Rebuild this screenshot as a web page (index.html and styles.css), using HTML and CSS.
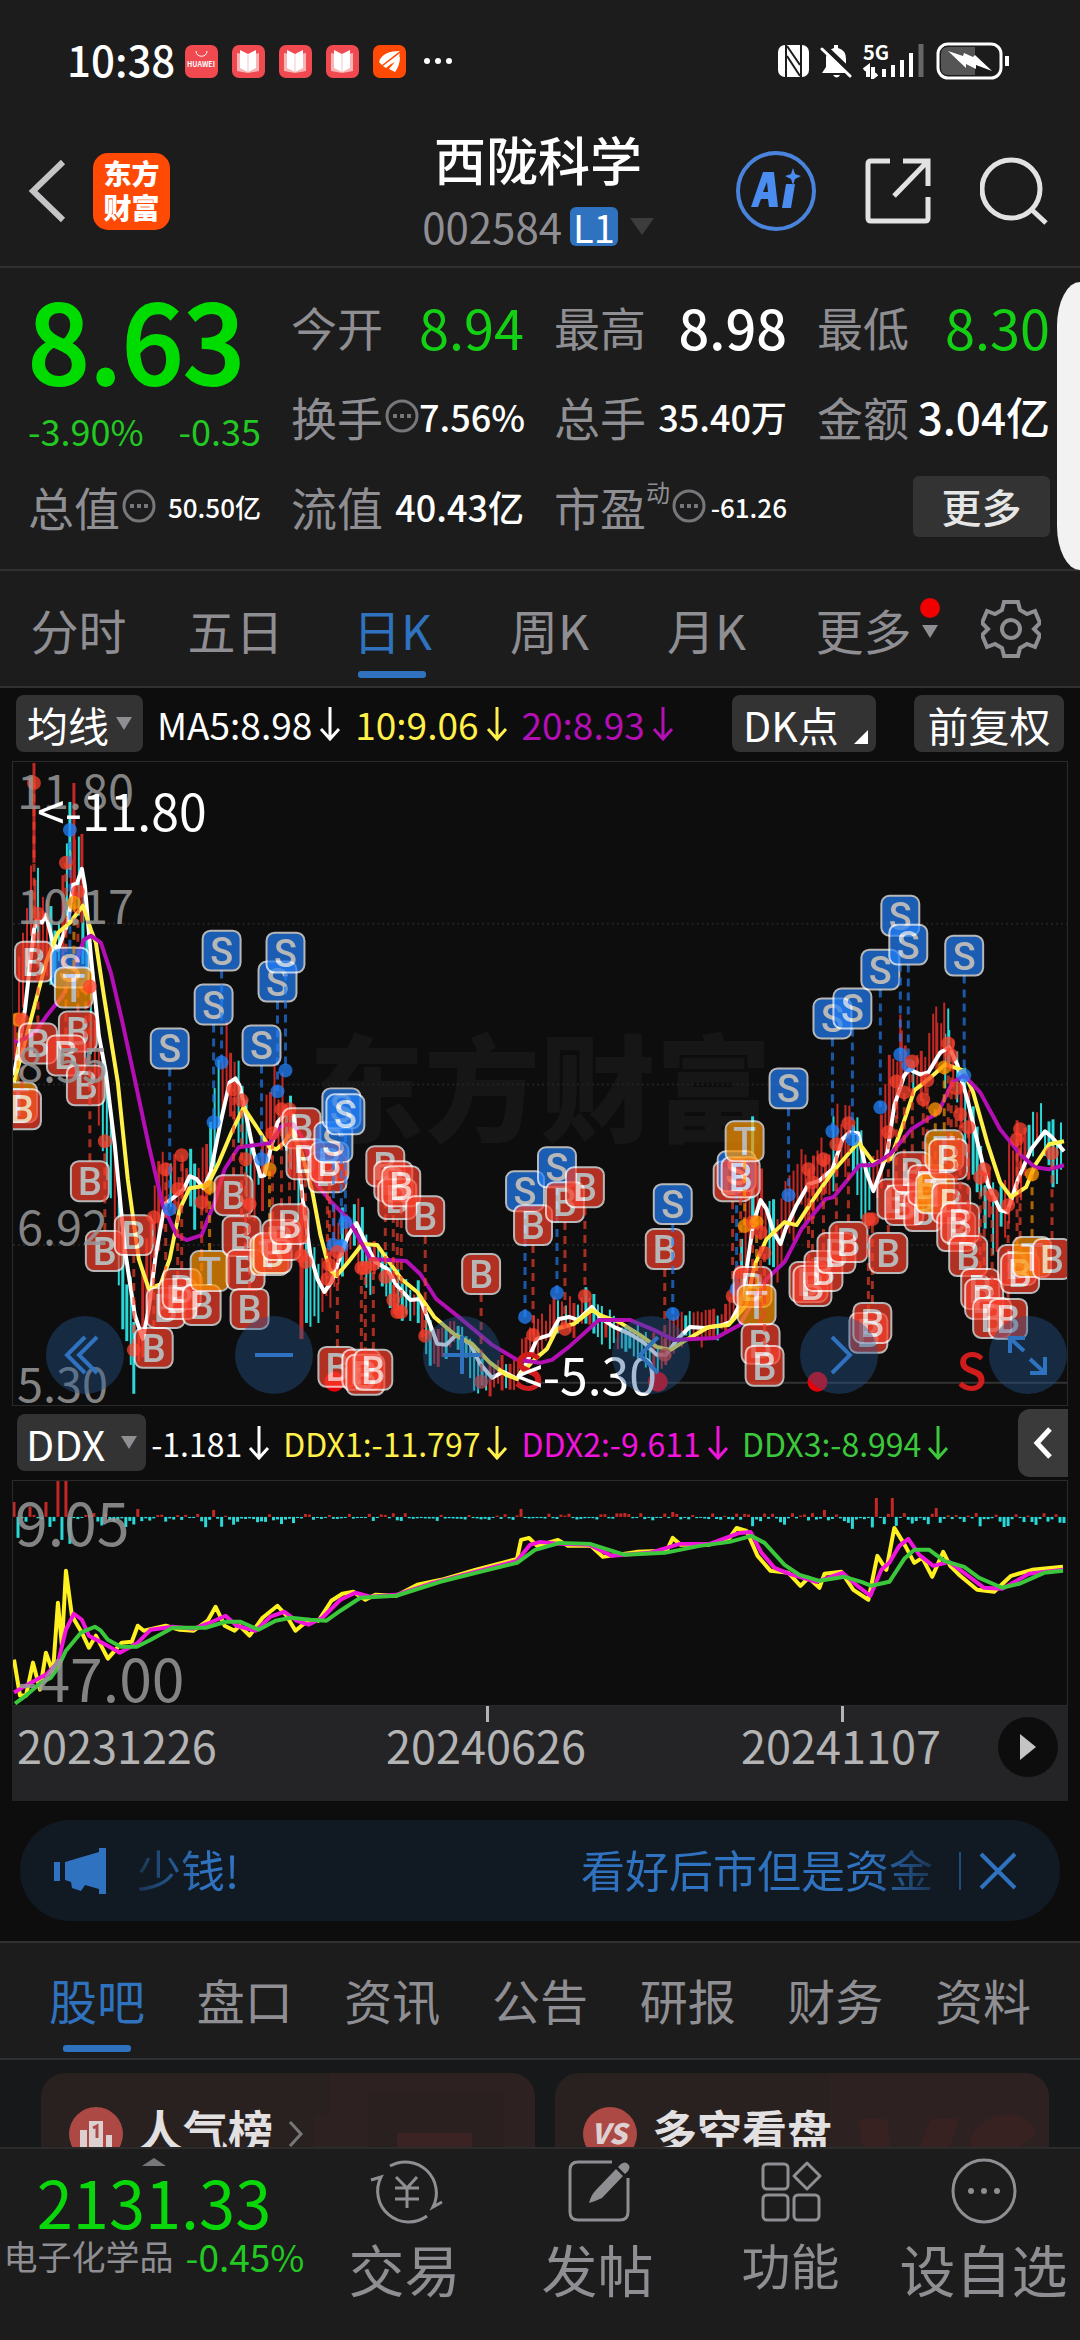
FILE: index.html
```html
<!DOCTYPE html>
<html lang="zh-CN">
<head>
    <meta charset="UTF-8">
    <title>西陇科学 002584</title>
    <meta name="viewport" content="width=device-width, initial-scale=1.0">
    <link rel="stylesheet" href="styles.css">
</head>
<body>
    <div class="status-bar">
        <div class="status-left">
            <span class="time">10:38</span>
            <svg class="app-icon" viewBox="0 0 33 33"><rect width="33" height="33" rx="7" fill="#f04a50"/><path d="M11 6c0 7 11 7 11 0" fill="none" stroke="#fff"/><text x="16" y="22" font-size="7" font-weight="700" fill="#fff" text-anchor="middle">HUAWEI</text></svg>
            <svg class="app-icon" viewBox="0 0 33 33"><rect width="33" height="33" rx="7" fill="#f04a50"/><path d="M5 8l11 2 11-2v18l-11 2-11-2z" fill="#f9b5b5"/><path d="M8 5l8 4 8-4v18l-8 4-8-4z" fill="#fff"/><path d="M16 9v18" stroke="#f7c5c5"/></svg>
            <svg class="app-icon" viewBox="0 0 33 33"><rect width="33" height="33" rx="7" fill="#f04a50"/><path d="M5 8l11 2 11-2v18l-11 2-11-2z" fill="#f9b5b5"/><path d="M8 5l8 4 8-4v18l-8 4-8-4z" fill="#fff"/><path d="M16 9v18" stroke="#f7c5c5"/></svg>
            <svg class="app-icon" viewBox="0 0 33 33"><rect width="33" height="33" rx="7" fill="#f04a50"/><path d="M5 8l11 2 11-2v18l-11 2-11-2z" fill="#f9b5b5"/><path d="M8 5l8 4 8-4v18l-8 4-8-4z" fill="#fff"/><path d="M16 9v18" stroke="#f7c5c5"/></svg>
            <svg class="app-icon" viewBox="0 0 33 33"><rect width="33" height="33" rx="7" fill="#ff4a05"/><path d="M6 17C8 9 17 6 27 6L9 20zM10 21L27 8c-1 6-4 9-9 11l-5 4zM16 24L27 11c0 7-2 12-5 16z" fill="#fff"/></svg>
            <svg class="dots" viewBox="0 0 28 6"><circle cx="3" cy="3" r="3"/><circle cx="14" cy="3" r="3"/><circle cx="25" cy="3" r="3"/></svg>
        </div>
        <div class="status-right">
            <svg width="31" height="34" viewBox="0 0 31 34"><rect y="1" width="31" height="32" rx="7" fill="#fff"/><path d="M8 1v32M23 1v32" stroke="#1c1c1c" stroke-width="2"/><path d="M9 2l13 19M9 12l13 20" fill="none" stroke="#1c1c1c" stroke-width="2"/></svg>
            <svg width="32" height="36" viewBox="0 0 32 36"><path d="M14 2h4v3q8 2 8 11v8l5 6H2l4-6V14q1-7 8-9z" fill="#fff"/><path d="M13 32h7q-3 5-7 0z" fill="#fff"/><path d="M3 2l30 29" stroke="#1c1c1c" stroke-width="5"/><path d="M2 6l28 27" stroke="#fff" stroke-width="3" stroke-linecap="round"/></svg>
            <svg width="62" height="36" viewBox="0 0 62 36"><text x="0" y="17" font-size="20" font-weight="700" fill="#fff">5G</text><path d="M5 34V24l-4 3M10 24v10l4-3M21 34v-8M30 34V22M39 34V17M48 34V10" fill="none" stroke="#fff" stroke-width="4"/><path d="M58 34V1" stroke="#666" stroke-width="5"/></svg>
            <svg width="74" height="38" viewBox="0 0 74 38"><rect x="2" y="2" width="63" height="34" rx="10" fill="#1c1c1c" stroke="#fff" stroke-width="3"/><path d="M12 5h27v28H12q-7 0-7-7V12q0-7 7-7z" fill="#555"/><path d="M12 9l15 5 1-3 9 4 2-2 17 16-16-6v4l-10-5v4z" fill="#fff"/><path d="M71 14v10" stroke="#fff" stroke-width="4"/></svg>
        </div>
    </div>

    <header class="header">
        <div class="header-side">
            <button class="icon-button back" aria-label="返回"><svg width="38" height="64" viewBox="0 0 38 64"><path d="M35 3L5 32l30 29" fill="none" stroke="#c4c4c6" stroke-width="6"/></svg></button>
            <div class="logo"><span>东方</span><span>财富</span></div>
        </div>
        <div class="stock">
            <h1>西陇科学</h1>
            <div class="stock-code">002584<span class="level">L1</span><span class="caret dark"></span></div>
        </div>
        <div class="header-side right">
            <button class="icon-button" aria-label="AI"><svg width="80" height="82" viewBox="0 0 80 82"><circle cx="40" cy="41" r="38" fill="none" stroke="#4a83dc" stroke-width="4"/><path d="M15 57l12-35h11l4 35h-9l-1-8h-7l-3 8zm12-15h5l-1-10zM50 34h9l-4 24h-9zM57 18l2 6 6 2-6 3-2 6-2-6-6-3 6-2z" fill="#4a8cf0" fill-rule="evenodd"/></svg></button>
            <button class="icon-button" aria-label="分享"><svg width="66" height="66" viewBox="0 0 66 66"><path d="M25 3H6Q3 3 3 6v54q0 3 3 3h54q3 0 3-3V39M38 3h25v25M63 3L29 38" fill="none" stroke="#e2e2e2" stroke-width="5"/></svg></button>
            <button class="icon-button" aria-label="搜索"><svg width="68" height="68" viewBox="0 0 68 68"><circle cx="31" cy="32" r="29" fill="none" stroke="#e2e2e2" stroke-width="5"/><path d="M51 52l15 14" stroke="#e2e2e2" stroke-width="5"/></svg></button>
        </div>
    </header>

    <section class="quote">
        <div class="price-block">
            <div class="price">8.63</div>
            <div class="change"><span>-3.90%</span><span>-0.35</span></div>
        </div>
        <div class="cell"><span class="label">今开</span><span class="value large down">8.94</span></div>
        <div class="cell"><span class="label">最高</span><span class="value large">8.98</span></div>
        <div class="cell"><span class="label">最低</span><span class="value large down">8.30</span></div>
        <div class="cell"><span class="label">换手</span><svg class="tip" viewBox="0 0 34 34"><use href="#tip"/></svg><span class="value">7.56%</span></div>
        <div class="cell"><span class="label">总手</span><span class="value">35.40万</span></div>
        <div class="cell"><span class="label">金额</span><span class="value medium">3.04亿</span></div>
        <div class="cell"><span class="label">总值</span><svg class="tip" viewBox="0 0 34 34"><use href="#tip"/></svg><span class="value small">50.50亿</span></div>
        <div class="cell"><span class="label">流值</span><span class="value">40.43亿</span></div>
        <div class="cell"><span class="label">市盈<sup>动</sup></span><svg class="tip" viewBox="0 0 34 34"><use href="#tip"/></svg><span class="value small">-61.26</span></div>
        <div class="cell"><button class="more-button">更多</button></div>
        <div class="side-handle"></div>
    </section>

    <nav class="period-tabs">
        <a href="#">分时</a>
        <a href="#">五日</a>
        <a href="#" class="active">日K</a>
        <a href="#">周K</a>
        <a href="#">月K</a>
        <a href="#">更多<span class="more-mark"><i class="red-dot"></i><i class="caret small"></i></span></a>
        <button class="icon-button" aria-label="设置"><svg width="60" height="60" viewBox="0 0 60 60"><path d="M23 3h14l2 8 7 4 8-3 5 12-6 6 6 6-5 12-8-3-7 4-2 8H23l-2-8-7-4-8 3-5-12 6-6-6-6 5-12 8 3 7-4z" fill="none" stroke="#8e8e93" stroke-width="4"/><circle cx="30" cy="30" r="9" fill="none" stroke="#8e8e93" stroke-width="4"/></svg></button>
    </nav>

    <main class="charts">
        <div class="ma-row">
            <button class="chip">均线<span class="caret small"></span></button>
            <span class="ma">MA5:8.98<svg class="arrow" viewBox="0 0 22 34"><use href="#down"/></svg></span>
            <span class="ma yellow">10:9.06<svg class="arrow" viewBox="0 0 22 34"><use href="#down"/></svg></span>
            <span class="ma purple">20:8.93<svg class="arrow" viewBox="0 0 22 34"><use href="#down"/></svg></span>
            <button class="chip dk">DK点<span class="corner"></span></button>
            <button class="chip adjust">前复权</button>
        </div>

        <div class="chart-box">
            <svg id="kline" viewBox="12 759 1056 644">
                <text class="watermark" x="308" y="1131">东方财富</text>
                <g class="grid">
                    <path d="M12 921H1068M12 1082H1068M12 1243H1068" stroke-dasharray="2 3"/>
                    <path class="solid" d="M526 1381H1068"/>
                </g>
                <g id="candles"></g>
                <g class="lines" id="ma-lines"></g>
                <g id="markers"></g>
                <g class="axis">
                    <text x="16" y="806">11.80</text>
                    <text x="16" y="921">10.17</text>
                    <text x="16" y="1080">8.55</text>
                    <text x="16" y="1243">6.92</text>
                    <text x="16" y="1400">5.30</text>
                </g>
                <text class="signal" x="513" y="1388">S</text>
                <text class="signal" x="957" y="1388">S</text>
                <text class="extreme" x="36" y="828">&lt;-11.80</text>
                <text class="extreme" x="515" y="1393">&lt;-5.30</text>
            </svg>
            <div class="chart-controls">
                <button aria-label="最早"><svg viewBox="0 0 78 78"><path d="M39 21L21 39l18 18M51 21L33 39l18 18"/></svg></button>
                <button aria-label="缩小"><svg viewBox="0 0 78 78"><path d="M20 39h38"/></svg></button>
                <button aria-label="放大"><svg viewBox="0 0 78 78"><path d="M20 39h38M39 20v38"/></svg></button>
                <button aria-label="向左"><svg viewBox="0 0 78 78"><path d="M46 21L28 39l18 18"/></svg></button>
                <button aria-label="向右"><svg viewBox="0 0 78 78"><path d="M32 21l18 18-18 18"/></svg></button>
                <button aria-label="全屏"><svg viewBox="0 0 78 78"><path d="M36 22H21v15M22 23l13 12M41 57h15V41M55 56L41 43"/></svg></button>
            </div>
        </div>

        <div class="ddx-row">
            <button class="chip">DDX<span class="caret small"></span></button>
            <span class="ddx">-1.181<svg class="arrow" viewBox="0 0 22 34"><use href="#down"/></svg></span>
            <span class="ddx yellow">DDX1:-11.797<svg class="arrow" viewBox="0 0 22 34"><use href="#down"/></svg></span>
            <span class="ddx magenta">DDX2:-9.611<svg class="arrow" viewBox="0 0 22 34"><use href="#down"/></svg></span>
            <span class="ddx green">DDX3:-8.994<svg class="arrow" viewBox="0 0 22 34"><use href="#down"/></svg></span>
            <button class="fold" aria-label="展开"><svg width="20" height="34" viewBox="0 0 20 34"><path d="M17 3L4 17l13 14" fill="none" stroke="#fff" stroke-width="5"/></svg></button>
        </div>

        <div class="chart-box">
            <svg id="ddx" viewBox="12 1478 1056 225">
                <g id="ddx-bars"></g>
                <g class="lines" id="ddx-lines"></g>
                <g class="axis big">
                    <text x="14" y="1543">9.05</text>
                    <text x="16" y="1699">-47.00</text>
                </g>
            </svg>
        </div>

        <div class="date-strip">
            <span>20231226</span>
            <span class="tick">20240626</span>
            <span class="tick">20241107</span>
            <button class="play" aria-label="播放"><svg width="16" height="26" viewBox="0 0 16 26"><path d="M0 0l16 13L0 26z" fill="#c4c4c4"/></svg></button>
        </div>

        <div class="notice">
            <svg width="54" height="46" viewBox="0 0 54 46"><path d="M0 14h6v19H0zM11 14L45 4V0h7v46h-7v-5l-14-4-4 6-9-3-1-6-6-2z" fill="#2f72bf"/></svg>
            <div class="notice-text"><span>少钱!</span><span>看好后市但是资金</span></div>
            <button class="icon-button close" aria-label="关闭"><svg width="38" height="38" viewBox="0 0 38 38"><path d="M2 2l34 34M36 2L2 36" stroke="#2f72bf" stroke-width="4"/></svg></button>
        </div>
    </main>

    <nav class="info-tabs">
        <a href="#" class="active">股吧</a>
        <a href="#">盘口</a>
        <a href="#">资讯</a>
        <a href="#">公告</a>
        <a href="#">研报</a>
        <a href="#">财务</a>
        <a href="#">资料</a>
    </nav>

    <section class="feed">
        <a href="#" class="card">
            <svg width="54" height="54" viewBox="0 0 54 54"><circle cx="27" cy="27" r="27" fill="#ad4944"/><path d="M11 23h7v18h-7zM37 28h6v13h-6z" fill="#ddd0d0"/><path d="M20 14h14v27H20z" fill="#ddd0d0"/><path d="M24 21l4-2v12" fill="none" stroke="#ad4944" stroke-width="3"/></svg>
            <span class="card-title">人气榜</span>
            <svg class="go" width="16" height="28" viewBox="0 0 16 28"><path d="M2 2l11 12L2 26" fill="none" stroke="#777" stroke-width="3"/></svg>
            <svg class="card-art" width="220" height="76" viewBox="0 0 220 76"><path d="M15 0h205v76H0V42h15z" fill="#2d2221"/><path d="M53 20h136v56H53z" fill="#2a201f"/><path d="M82 60h75v16H82z" fill="#3a2322"/></svg>
        </a>
        <a href="#" class="card">
            <svg width="54" height="54" viewBox="0 0 54 54"><circle cx="27" cy="27" r="27" fill="#ad4944"/><text x="26" y="37" font-size="28" font-weight="800" font-style="italic" fill="#ddd0d0" text-anchor="middle">VS</text></svg>
            <span class="card-title">多空看盘</span>
            <svg class="card-art" width="220" height="76" viewBox="0 0 220 76"><path d="M0 0h220v76H0z" fill="#2d2221"/><path d="M30 46h28l4 30H34zM90 76l12-30h28l-10 30zM140 76q4-34 40-34 22 0 27 20l-20 14z" fill="#372221"/></svg>
        </a>
    </section>

    <nav class="bottom-bar">
        <a href="#" class="sector">
            <i class="caret up"></i>
            <strong>2131.33</strong>
            <span class="sector-line"><span>电子化学品</span><b>-0.45%</b></span>
        </a>
        <a href="#" class="action">
            <svg width="76" height="68" viewBox="0 0 76 68"><path d="M23 9a31 31 0 0 1 43 41l9-5M60 59A31 31 0 0 1 14 20l-10 3M29 20l11 11 10-11M28 31h24M28 42h24M40 31v20"/></svg>
            <span>交易</span>
        </a>
        <a href="#" class="action">
            <svg width="76" height="68" viewBox="0 0 76 68"><path d="M52 5H18q-8 0-8 8v42q0 8 8 8h42q8 0 8-8V21"/><path d="M61 7q4-3 7 0t0 7l-3 3-7-7zM56 12l7 7-21 22q-6 3-13 5 2-8 7-13z" fill="#8e8e93" stroke="none"/></svg>
            <span>发帖</span>
        </a>
        <a href="#" class="action">
            <svg width="76" height="68" viewBox="0 0 76 68"><rect x="10" y="7" width="25" height="25" rx="4"/><rect x="10" y="38" width="25" height="25" rx="4"/><rect x="41" y="38" width="25" height="25" rx="4"/><path d="M54 6l13 13-13 13-13-13z" stroke-linejoin="round"/></svg>
            <span class="compact">功能</span>
        </a>
        <a href="#" class="action">
            <svg width="76" height="68" viewBox="0 0 76 68"><circle cx="38" cy="34" r="31"/><g fill="#8e8e93" stroke="none"><circle cx="25" cy="34" r="3"/><circle cx="38" cy="34" r="3"/><circle cx="51" cy="34" r="3"/></g></svg>
            <span>设自选</span>
        </a>
    </nav>

    <svg class="symbols" width="0" height="0">
        <symbol id="tip" viewBox="0 0 34 34"><circle cx="17" cy="17" r="15" fill="none" stroke="#77777b" stroke-width="3"/><path d="M8 15h4v4H8zM15 15h4v4h-4zM22 15h4v4h-4z" fill="#77777b"/></symbol>
        <symbol id="down" viewBox="0 0 22 34"><path d="M11 0v32M2 22l9 10 9-10" fill="none" stroke="currentColor" stroke-width="3"/></symbol>
    </svg>
    <script src="chart.js"></script>
</body>
</html>
```
FILE: styles.css
```css
* {
    box-sizing: border-box;
}
body {
    margin: 0;
    height: 100vh;
    display: flex;
    flex-direction: column;
    overflow: hidden;
    background: #1c1c1c;
    color: #fff;
    font-family: "Noto Sans CJK SC", "Noto Sans", sans-serif;
}
a {
    color: inherit;
    text-decoration: none;
}
button {
    border: none;
    padding: 0;
    background: none;
    color: #fff;
    font-family: inherit;
    cursor: pointer;
}
svg {
    display: block;
    flex: none;
}
.icon-button {
    display: flex;
}
.symbols {
    position: absolute;
}
.caret {
    border: 12px solid transparent;
    border-top: 17px solid #3c3c3c;
    border-bottom: none;
}
.caret.small {
    border-width: 13px 8px 0 8px;
    border-top-color: #8e8e93;
}
.caret.up {
    border-width: 0 12px 8px 12px;
    border-bottom: 8px solid #77777b;
}

/* status bar */
.status-bar {
    height: 122px;
    padding: 0 70px 0 67px;
    display: flex;
    align-items: center;
    justify-content: space-between;
}
.status-left, .status-right {
    display: flex;
    align-items: center;
}
.status-left {
    gap: 14px;
}
.status-right {
    gap: 11px;
}
.time {
    margin-right: -4px;
    padding-bottom: 4px;
    font-size: 42px;
    font-weight: 500;
    line-height: 46px;
}
.app-icon {
    width: 33px;
    height: 33px;
}
.dots {
    width: 28px;
    height: 6px;
    margin-left: 4px;
    fill: #fff;
}

/* header */
.header {
    height: 146px;
    padding: 0 32px 0 28px;
    display: grid;
    grid-template-columns: 1fr auto 1fr;
    border-bottom: 2px solid #303030;
}
.header-side {
    display: flex;
    align-items: center;
    gap: 27px;
    padding-bottom: 6px;
}
.header-side.right {
    justify-content: flex-end;
    gap: 49px;
}
.logo {
    width: 77px;
    height: 77px;
    padding-bottom: 3px;
    border-radius: 15px;
    background: #ff4a05;
    display: flex;
    flex-direction: column;
    align-items: center;
    justify-content: center;
    font-size: 28px;
    font-weight: 900;
    line-height: 34px;
}
.stock {
    text-align: center;
}
.stock h1 {
    margin: 2px 0 0;
    font-size: 52px;
    font-weight: 500;
    line-height: 70px;
}
.stock-code {
    display: flex;
    align-items: center;
    gap: 8px;
    color: #8e8e93;
    font-size: 42px;
    line-height: 64px;
}
.level {
    padding: 0 3px;
    border-radius: 6px;
    background: #2f72bf;
    color: #fff;
    font-size: 38px;
    line-height: 39px;
}
.stock-code .caret {
    margin-left: 4px;
}

/* quote */
.quote {
    position: relative;
    padding: 13px 30px 18px 28px;
    display: grid;
    grid-template-columns: repeat(4, minmax(0, 1fr));
    grid-auto-rows: 90px;
    column-gap: 30px;
    border-bottom: 2px solid #303030;
}
.price-block {
    grid-row: span 2;
    color: #00dc00;
}
.price {
    margin-top: 3px;
    font-size: 108px;
    font-weight: 500;
    line-height: 106px;
    -webkit-text-stroke: 2px #00dc00;
}
.change {
    display: flex;
    justify-content: space-between;
    margin-top: 14px;
    color: #22c922;
    font-size: 36px;
    line-height: 52px;
}
.cell {
    display: flex;
    align-items: center;
    white-space: nowrap;
}
.label {
    color: #8e8e93;
    font-size: 46px;
}
.label sup {
    font-size: 24px;
    line-height: 24px;
    vertical-align: 24px;
}
.tip {
    width: 34px;
    height: 34px;
    margin-left: 2px;
}
.value {
    margin-left: auto;
    font-size: 36px;
    font-weight: 500;
}
.value.small {
    font-size: 26px;
}
.value.medium {
    font-size: 44px;
}
.value.large {
    font-size: 54px;
}
.down {
    color: #14d014;
    font-weight: 400;
}
.more-button {
    margin-left: auto;
    width: 137px;
    height: 61px;
    border-radius: 6px;
    background: #333;
    color: #e6e6e6;
    font-size: 40px;
    font-weight: 500;
    line-height: 56px;
}
.side-handle {
    position: absolute;
    top: 14px;
    right: 0;
    width: 23px;
    height: 288px;
    background: #f2f2f2;
    border-radius: 23px 0 0 23px / 44px 0 0 44px;
}

/* tabs */
.period-tabs {
    height: 117px;
    display: grid;
    grid-template-columns: repeat(6, 157fr) 138fr;
    align-items: center;
    justify-items: center;
    border-bottom: 2px solid #303030;
    color: #8e8e93;
    font-size: 48px;
    line-height: 110px;
}
.period-tabs a, .info-tabs a {
    position: relative;
}
.active {
    color: #2f72bf;
}
.active::after {
    content: "";
    position: absolute;
    left: calc(50% - 34px);
    bottom: 6px;
    width: 68px;
    height: 7px;
    border-radius: 3px;
    background: #2f72bf;
}
.more-mark {
    position: absolute;
    left: 100%;
    top: 24px;
    margin-left: 8px;
    display: flex;
    flex-direction: column;
    align-items: center;
    gap: 7px;
}
.red-dot {
    width: 20px;
    height: 20px;
    border-radius: 50%;
    background: #f00000;
}
.info-tabs {
    height: 119px;
    padding: 0 49px;
    display: flex;
    justify-content: space-between;
    border-top: 2px solid #303030;
    border-bottom: 2px solid #303030;
    color: #8e8e93;
    font-size: 48px;
    line-height: 112px;
}

/* charts */
.charts {
    padding: 0 12px;
    background: #0d0d0d;
}
.ma-row {
    height: 73px;
    padding: 0 4px 2px;
    display: flex;
    align-items: center;
    white-space: nowrap;
}
.chip {
    height: 57px;
    padding: 0 11px;
    border-radius: 8px;
    background: #333;
    display: flex;
    align-items: center;
    gap: 7px;
    font-size: 41px;
    line-height: 50px;
}
.ma, .ddx {
    display: flex;
    align-items: center;
    gap: 7px;
    margin-left: 14px;
    font-size: 37px;
    line-height: 50px;
}
.arrow {
    width: 22px;
    height: 34px;
}
.yellow {
    color: #fff04a;
}
.purple {
    color: #b40fb4;
}
.magenta {
    color: #f014dc;
}
.green {
    color: #3cc83c;
}
.chip.dk {
    position: relative;
    width: 144px;
    margin: 0 38px 0 auto;
}
.chip.adjust {
    width: 150px;
    justify-content: center;
}
.corner {
    position: absolute;
    right: 8px;
    bottom: 8px;
    border-left: 14px solid transparent;
    border-bottom: 14px solid #fff;
}
.chart-box {
    position: relative;
    border: 1px solid #2a2a2a;
}
.chart-box > svg {
    width: 100%;
    height: auto;
}
.watermark {
    fill: #161616;
    font-size: 116px;
    font-weight: 900;
}
.grid {
    stroke: #222;
    stroke-width: 2;
}
.grid .solid {
    stroke: #333;
}
.lines {
    fill: none;
    stroke-width: 4;
    stroke-linejoin: round;
}
.axis {
    fill: #999;
    fill-opacity: 0.85;
    font-size: 47px;
}
.axis.big {
    font-size: 59px;
}
.extreme {
    fill: #fff;
    font-size: 50px;
}
.signal {
    fill: #d01c1c;
    font-size: 50px;
    font-weight: 500;
}
.badge {
    stroke: #fff;
    stroke-width: 2;
    opacity: 0.7;
}
.badge text {
    fill: #fff;
    stroke: none;
    font: 500 38px Roboto, "Liberation Sans", sans-serif;
    text-anchor: middle;
}
.chart-controls {
    position: absolute;
    left: 33px;
    right: 0;
    bottom: 11px;
    display: flex;
    justify-content: space-between;
}
.chart-controls button {
    width: 78px;
    height: 78px;
    border-radius: 50%;
    background: rgba(38, 88, 148, 0.4);
}
.chart-controls svg {
    fill: none;
    stroke: #2f72bf;
    stroke-width: 4;
}
.ddx-row {
    height: 74px;
    padding-left: 5px;
    display: flex;
    align-items: center;
    white-space: nowrap;
}
.ddx-row .chip {
    padding: 0 9px;
    gap: 16px;
}
.ddx {
    margin-left: 5px;
    gap: 6px;
    font-size: 32px;
}
.ddx + .ddx {
    margin-left: 13px;
}
.fold {
    width: 50px;
    height: 68px;
    margin-left: auto;
    border-radius: 12px 0 0 12px;
    background: #3a3a3a;
    display: flex;
    align-items: center;
    justify-content: center;
}
.date-strip {
    height: 95px;
    padding: 0 10px 0 5px;
    background: #242427;
    display: grid;
    grid-template-columns: 271fr 396fr 314fr 60px;
    color: #b4b4b4;
    font-size: 45px;
    line-height: 78px;
}
.date-strip .tick {
    position: relative;
    text-align: center;
}
.tick::before {
    content: "";
    position: absolute;
    left: 50%;
    top: 0;
    width: 3px;
    height: 16px;
    background: #b4b4b4;
}
.play {
    width: 60px;
    height: 60px;
    margin-top: 11px;
    border-radius: 50%;
    background: #0d0d0d;
    display: flex;
    align-items: center;
    justify-content: center;
}
.notice {
    height: 101px;
    margin: 19px 8px 20px;
    padding: 0 43px 0 34px;
    border-radius: 50px;
    background: #111922;
    display: flex;
    align-items: center;
    color: #2f72bf;
    font-size: 44px;
}
.notice-text {
    flex: 1;
    display: flex;
    justify-content: space-between;
    margin: 0 26px 0 29px;
    padding-bottom: 4px;
    line-height: 60px;
    -webkit-mask: linear-gradient(90deg, rgba(0,0,0,0.3), #000 8%, #000 92%, rgba(0,0,0,0.3));
}
.close {
    padding-left: 18px;
    border-left: 2px solid #204b7c;
}

/* feed */
.feed {
    flex: 1;
    min-height: 0;
    overflow: hidden;
    padding: 13px 31px 0 41px;
    background: #17181a;
    display: grid;
    grid-template-columns: 1fr 1fr;
    gap: 20px;
}
.card {
    position: relative;
    height: 150px;
    padding: 18px 28px;
    border-radius: 24px;
    background: #292020;
    overflow: hidden;
    display: flex;
    gap: 15px;
    color: #e2e0e0;
    font-size: 45px;
    font-weight: 700;
    line-height: 78px;
}
.card > svg {
    position: relative;
    margin-top: 16px;
}
.card > .go {
    margin-top: 29px;
}
.card > .card-art {
    position: absolute;
    top: 0;
    right: 0;
    margin: 0;
}
.card-title {
    position: relative;
    z-index: 1;
}

/* bottom bar */
.bottom-bar {
    height: 193px;
    border-top: 2px solid #2b2b2b;
    display: grid;
    grid-template-columns: 308px repeat(4, 1fr);
    color: #8e8e93;
    white-space: nowrap;
}
.sector {
    padding-top: 9px;
    display: flex;
    flex-direction: column;
    align-items: center;
}
.sector strong {
    color: #0ad70a;
    font-size: 65px;
    font-weight: 400;
    line-height: 70px;
}
.sector-line {
    display: flex;
    gap: 12px;
    font-size: 34px;
    line-height: 40px;
}
.sector-line b {
    color: #22c922;
    font-size: 37px;
    font-weight: 400;
}
.action {
    padding-top: 8px;
    display: flex;
    flex-direction: column;
    align-items: center;
    font-size: 56px;
    line-height: 86px;
}
.action svg {
    fill: none;
    stroke: #8e8e93;
    stroke-width: 3;
}
.action .compact {
    font-size: 49px;
    line-height: 78px;
}
```
FILE: chart.js
```js
const NS = "http://www.w3.org/2000/svg";

const ma5 = [13,1073,24,1007,33,927,36,918,41,920,45,912,52,940,57,947,67,920,72,882,76,881,81,866,84,883,90,953,98,1033,105,1070,114,1143,124,1247,134,1313,142,1337,148,1307,155,1253,164,1202,172,1196,183,1187,189,1174,196,1177,203,1186,210,1170,220,1120,229,1080,235,1076,239,1083,245,1110,253,1150,260,1174,264,1173,270,1147,277,1120,286,1110,293,1113,296,1137,303,1203,310,1253,317,1277,324,1290,331,1280,339,1257,348,1233,356,1221,365,1240,375,1260,387,1267,396,1283,410,1298,420,1297,429,1320,437,1342,446,1343,456,1333,470,1342,480,1362,492,1376,503,1370,517,1377,527,1360,537,1337,550,1333,559,1317,569,1315,578,1318,592,1305,602,1317,614,1325,630,1332,643,1340,657,1353,666,1353,678,1337,690,1325,705,1326,723,1323,731,1320,740,1303,747,1267,754,1220,761,1198,767,1207,774,1230,781,1242,786,1227,797,1203,809,1182,819,1179,833,1167,843,1137,850,1130,859,1131,867,1170,874,1189,881,1170,888,1150,895,1103,905,1073,910,1067,921,1072,929,1070,941,1050,950,1045,958,1062,969,1100,979,1143,989,1183,1001,1208,1008,1210,1019,1177,1032,1147,1046,1129,1053,1135,1065,1149];
const ma10 = [13,1080,31,1013,45,960,57,930,69,920,82,903,90,927,95,940,103,993,117,1080,127,1177,138,1257,148,1287,160,1282,169,1257,179,1207,189,1186,207,1183,217,1163,231,1130,243,1105,255,1123,269,1145,276,1147,284,1140,291,1128,301,1150,312,1190,320,1233,329,1267,336,1274,348,1260,362,1242,377,1243,389,1260,401,1277,417,1290,434,1315,455,1333,472,1342,489,1360,506,1373,517,1377,532,1360,547,1347,557,1327,574,1322,592,1308,602,1314,619,1320,640,1333,657,1345,671,1348,688,1337,709,1325,729,1323,747,1303,755,1263,767,1237,785,1220,797,1223,812,1200,833,1170,859,1140,874,1160,891,1157,902,1127,915,1088,929,1077,946,1062,964,1068,974,1090,988,1140,1001,1180,1012,1195,1027,1185,1036,1163,1050,1142,1065,1139];
const ma20 = [13,1039,22,1037,34,1030,46,1013,62,993,72,970,83,937,90,933,100,940,110,970,121,1017,134,1077,148,1143,162,1203,176,1233,186,1238,201,1233,214,1200,224,1167,238,1145,269,1141,282,1123,293,1122,303,1137,317,1183,331,1200,348,1217,370,1257,406,1259,420,1272,436,1297,461,1317,492,1343,517,1358,540,1361,552,1358,569,1345,599,1318,630,1318,654,1328,674,1338,716,1336,740,1323,767,1277,785,1260,802,1227,826,1197,834,1195,860,1163,874,1163,891,1152,912,1127,939,1110,953,1080,965,1073,981,1090,1001,1127,1022,1153,1036,1165,1050,1167,1065,1163];

// type, x, badge y, price dot y
const markers = [
    ["T",17,1100,1017], ["B",21,1107,1017], ["B",33,959,780], ["B",37,1041,911], ["B",77,1029,889],
    ["B",65,1053,860], ["B",85,1083,984], ["S",69,965,827], ["T",73,985,900], ["B",89,1179,984],
    ["B",104,1249,1139], ["B",133,1233,1348], ["B",153,1346,1215], ["B",165,1306,1167], ["B",177,1297,1187],
    ["B",181,1287,1153], ["B",201,1303,1200], ["T",209,1269,1185], ["S",169,1046,1207], ["S",213,1002,1120],
    ["S",221,948,1060], ["S",277,979,1089], ["S",285,950,1068], ["S",261,1043,1157], ["B",233,1193,1087],
    ["B",241,1234,1098], ["B",245,1268,1157], ["B",249,1307,1202], ["T",269,1253,1167], ["B",272,1251,1131],
    ["B",281,1238,1107], ["B",289,1222,1107], ["B",301,1126,1254], ["B",305,1157,1260], ["B",327,1170,1277],
    ["B",329,1160,1263], ["S",333,1140,1243], ["S",341,1106,1244], ["S",345,1112,1220], ["B",337,1365,1250],
    ["B",361,1368,1266], ["B",365,1373,1266], ["B",373,1368,1262], ["B",385,1164,1275], ["B",393,1179,1298],
    ["B",397,1197,1310], ["B",401,1184,1310], ["B",425,1214,1334], ["B",481,1272,1380], ["S",525,1189,1315],
    ["B",533,1223,1333], ["S",557,1165,1291], ["B",565,1200,1327], ["B",585,1185,1294], ["B",665,1247,1353],
    ["S",673,1202,1312], ["B",733,1179,1294], ["S",737,1169,1287], ["B",741,1175,1270], ["T",745,1139,1224],
    ["B",753,1285,1220], ["T",757,1303,1220], ["B",761,1342,1230], ["B",765,1364,1251], ["S",789,1086,1193],
    ["B",809,1280,1167], ["B",813,1284,1180], ["B",824,1269,1157], ["B",837,1251,1142], ["B",849,1240,1121],
    ["B",869,1331,1217], ["B",873,1321,1217], ["B",889,1251,1130], ["S",833,1016,1129], ["S",853,1006,1137],
    ["S",881,967,1105], ["S",901,913,1052], ["S",909,942,1063], ["S",965,953,1073], ["B",897,1197,1079],
    ["B",905,1203,1090], ["B",913,1170,1059], ["B",924,1209,1097], ["B",928,1183,1078], ["T",936,1191,1107],
    ["B",952,1201,1053], ["T",945,1148,1065], ["B",949,1157,1041], ["B",957,1229,1086], ["B",961,1221,1112],
    ["B",969,1254,1125], ["B",981,1287,1175], ["B",985,1297,1167], ["B",993,1316,1193], ["B",1009,1317,1203],
    ["B",1018,1263,1137], ["B",1021,1271,1127], ["T",1033,1255,1172], ["B",1053,1257,1151]
];
const badgeColors = { B: "#f8402c", S: "#2280fa", T: "#ff9600" };

const ddx1 = [13,1657,19,1693,25,1693,32,1660,39,1687,45,1650,52,1670,57,1600,61,1643,65,1568,71,1613,81,1630,88,1645,95,1633,107,1656,121,1640,131,1639,137,1623,143,1628,165,1623,179,1627,193,1628,207,1618,215,1604,224,1623,234,1628,239,1623,249,1633,262,1615,277,1603,286,1613,295,1628,307,1618,318,1618,331,1598,342,1591,353,1589,365,1597,375,1592,396,1593,417,1582,441,1577,475,1567,517,1556,521,1537,529,1535,537,1543,558,1537,568,1543,591,1543,603,1554,637,1549,667,1548,673,1535,681,1542,709,1542,730,1535,737,1525,747,1528,758,1553,771,1568,789,1570,801,1583,809,1575,820,1585,825,1571,842,1569,854,1587,869,1597,878,1553,887,1567,895,1525,906,1543,915,1560,923,1555,933,1574,944,1549,951,1563,961,1573,978,1587,995,1589,1012,1573,1033,1567,1064,1564];
const ddx2 = [13,1690,25,1683,45,1672,57,1660,65,1627,73,1611,81,1617,88,1633,105,1642,119,1650,137,1640,150,1627,172,1624,193,1626,207,1621,225,1613,236,1623,255,1628,270,1614,284,1609,296,1618,308,1622,322,1615,340,1597,355,1590,370,1594,396,1592,430,1581,475,1569,517,1558,530,1542,540,1539,560,1541,590,1542,612,1553,650,1550,680,1541,710,1541,740,1530,751,1529,762,1550,775,1565,790,1571,817,1579,843,1570,858,1583,871,1593,882,1567,890,1560,900,1543,909,1536,920,1552,934,1563,950,1559,965,1570,985,1585,1003,1586,1030,1571,1064,1567];
const ddx3 = [14,1701,25,1693,40,1680,50,1675,57,1665,65,1648,80,1630,94,1624,100,1628,107,1637,120,1644,136,1644,150,1637,172,1625,205,1625,225,1619,240,1619,258,1627,275,1618,290,1615,310,1617,326,1618,340,1608,360,1595,396,1593,440,1579,480,1569,517,1560,535,1547,560,1540,590,1541,625,1552,665,1550,700,1543,730,1539,752,1533,765,1540,785,1562,800,1572,820,1578,845,1574,862,1579,872,1583,890,1579,905,1556,915,1547,930,1547,945,1558,965,1564,980,1575,1003,1585,1020,1581,1045,1570,1064,1568];
const ddxSpikes = { 13: 1499, 17: 1535, 29: 1504, 45: 1499, 49: 1524, 57: 1478, 61: 1537, 65: 1478, 69: 1541, 137: 1506, 213: 1507, 521: 1506, 673: 1509, 825: 1507, 877: 1495, 893: 1495, 937: 1505 };

let seed = 11;
function random() {
    seed = (seed * 16807) % 2147483647;
    return seed / 2147483647;
}

function add(parent, tag, attrs) {
    const el = document.createElementNS(NS, tag);
    for (const key in attrs) el.setAttribute(key, attrs[key]);
    parent.appendChild(el);
    return el;
}

function valueAt(points, x) {
    for (let i = 2; i < points.length; i += 2) {
        if (points[i] >= x) {
            const t = (x - points[i - 2]) / (points[i] - points[i - 2]);
            return points[i - 1] + t * (points[i + 1] - points[i - 1]);
        }
    }
    return points[points.length - 1];
}

function drawLine(parent, points, color) {
    add(parent, "polyline", { points: points.join(" "), stroke: color });
}

function bar(parent, x, y1, y2, color, width) {
    add(parent, "path", { d: "M" + x + " " + y1 + "V" + y2, stroke: color, "stroke-width": width });
}

// candles
const candles = document.getElementById("candles");
for (let x = 14; x < 1066; x += 4) {
    const mid = valueAt(ma5, Math.min(x + 3, 1065));
    const slope = valueAt(ma5, Math.min(x + 9, 1065)) - valueAt(ma5, Math.max(x - 4, 14));
    const calm = x > 380 && x < 735;
    const half = (calm ? 6 : 10) + random() * (calm ? 12 : 24) + Math.min(Math.abs(slope) / 4, 16);
    const shift = (random() - 0.5) * (calm ? 10 : 28) + slope / 4;
    const color = random() < (slope > 3 ? 0.25 : slope < -3 ? 0.82 : 0.5) ? "#c42824" : "#2ad8d8";
    bar(candles, x, Math.max(760, mid + shift - half), Math.min(1400, mid + shift + half), color, random() < 0.3 ? 3 : 2);
}
bar(candles, 33, 760, 860, "#c42824", 3);
bar(candles, 37, 865, 960, "#2ad8d8", 2);
bar(candles, 69, 799, 867, "#2ad8d8", 3);
bar(candles, 73, 780, 900, "#c42824", 3);
bar(candles, 81, 831, 920, "#c42824", 3);
bar(candles, 301, 1200, 1337, "#c42824", 4);
bar(candles, 133, 1320, 1392, "#2ad8d8", 3);
bar(candles, 753, 1114, 1220, "#2ad8d8", 3);
bar(candles, 901, 1012, 1080, "#c42824", 2);
bar(candles, 937, 1004, 1070, "#c42824", 2);
bar(candles, 945, 1000, 1060, "#c42824", 2);
bar(candles, 949, 1006, 1060, "#2ad8d8", 2);

const maLines = document.getElementById("ma-lines");
drawLine(maLines, ma5, "#fff");
drawLine(maLines, ma10, "#fff04a");
drawLine(maLines, ma20, "#b40fb4");

// buy and sell markers
const group = document.getElementById("markers");
for (const x of [334, 658, 818]) add(group, "circle", { cx: x, cy: 1380, r: 10, fill: "#e80008" });
for (const [type, x, y, dot] of markers) {
    const color = badgeColors[type];
    const edge = dot > y ? y + 20 : y - 20;
    add(group, "path", { d: "M" + x + " " + edge + "V" + dot, stroke: color, "stroke-width": 3, "stroke-dasharray": "8 6", opacity: 0.65 });
    add(group, "circle", { cx: x, cy: dot, r: 7, fill: color, opacity: 0.75 });
    const badge = add(group, "g", { class: "badge" });
    add(badge, "rect", { x: x - 19, y: y - 20, width: 38, height: 40, rx: 8, fill: color });
    add(badge, "text", { x: x, y: y + 14 }).textContent = type;
}

// DDX
const bars = document.getElementById("ddx-bars");
for (let x = 13; x < 1066; x += 4) {
    let end = ddxSpikes[x];
    if (!end) {
        const busy = x < 300 || x > 740;
        end = random() < 0.25 ? 1514 - 1 - random() * 3 : 1514 + 1 + random() * random() * (busy ? 12 : 4);
    }
    bar(bars, x, 1514, end, end < 1514 ? "#c42824" : "#2ad8d8", 3);
}
const ddxLines = document.getElementById("ddx-lines");
drawLine(ddxLines, ddx1, "#fff020");
drawLine(ddxLines, ddx2, "#f014dc");
drawLine(ddxLines, ddx3, "#3cc83c");
```
